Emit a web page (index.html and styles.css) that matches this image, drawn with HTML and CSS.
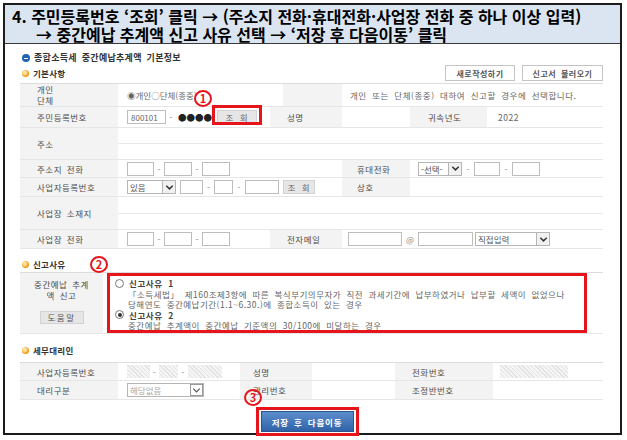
FILE: index.html
```html
<!DOCTYPE html>
<html lang="ko">
<head>
<meta charset="utf-8">
<title>종합소득세 중간예납추계액 기본정보</title>
<link rel="stylesheet" href="styles.css">
</head>
<body>
<div class="frame">
  <div class="title">
    <p>4. 주민등록번호 ‘조회’ 클릭 → (주소지 전화·휴대전화·사업장 전화 중 하나 이상 입력)<br><span class="indent">→ 중간예납 추계액 신고 사유 선택 → ‘저장 후 다음이동’ 클릭</span></p>
  </div>

  <div class="content">
    <h2 class="sec-main"><span class="ico-blue"></span>종합소득세 중간예납추계액 기본정보</h2>

    <div class="sec-head">
      <h3 class="sec"><span class="ico-orange"></span>기본사항</h3>
      <div class="tools">
        <button class="btn-w b1">새로작성하기</button>
        <button class="btn-w b2">신고서 불러오기</button>
      </div>
    </div>

    <div class="tbl">
      <div class="row h23">
        <div class="lb c98 two">개인<br>단체</div>
        <div class="vl c165"><span class="rtxt">◉개인○단체(종중)</span></div>
        <div class="lb c59"></div>
        <div class="vl c261 desc">개인 또는 단체(종중) 대하여 신고할 경우에 선택합니다.</div>
      </div>
      <div class="row h21">
        <div class="lb c98">주민등록번호</div>
        <div class="vl c152">
          <span class="in w39">800101</span><span class="dash w10">-</span><span class="in w38 pw">●●●●</span><span class="btn-g w40 ml3">조 회</span>
        </div>
        <div class="lb c72">성명</div>
        <div class="vl c68"></div>
        <div class="lb c77">귀속년도</div>
        <div class="vl c116 txt">2022</div>
      </div>
      <div class="row h32">
        <div class="lb c98">주소</div>
        <div class="vl c485 split"><div class="sub"></div><div class="sub"></div></div>
      </div>
      <div class="row h18">
        <div class="lb c98">주소지 전화</div>
        <div class="vl c224">
          <span class="in w27"></span><span class="dash w10">-</span><span class="in w28"></span><span class="dash w10">-</span><span class="in w28"></span>
        </div>
        <div class="lb c68">휴대전화</div>
        <div class="vl c193 pl8">
          <span class="sel w44"><span class="st">-선택-</span><span class="arr"><svg viewBox="0 0 12 12" width="11" height="11"><polyline points="2.5,4 6,7.5 9.5,4" fill="none" stroke="#333" stroke-width="1.6"/></svg></span></span><span class="dash w12">-</span><span class="in w26"></span><span class="dash w12">-</span><span class="in w28"></span>
        </div>
      </div>
      <div class="row h19">
        <div class="lb c98">사업자등록번호</div>
        <div class="vl c224">
          <span class="sel w49"><span class="st">있음</span><span class="arr"><svg viewBox="0 0 12 12" width="11" height="11"><polyline points="2.5,4 6,7.5 9.5,4" fill="none" stroke="#333" stroke-width="1.6"/></svg></span></span><span class="in w23 ml4"></span><span class="dash w11">-</span><span class="in w19"></span><span class="dash w12">-</span><span class="in w34"></span><span class="btn-g w32 ml4">조 회</span>
        </div>
        <div class="lb c68">상호</div>
        <div class="vl c193"></div>
      </div>
      <div class="row h33">
        <div class="lb c98">사업장 소재지</div>
        <div class="vl c485 split"><div class="sub"></div><div class="sub"></div></div>
      </div>
      <div class="row h19">
        <div class="lb c98">사업장 전화</div>
        <div class="vl c152">
          <span class="in w27"></span><span class="dash w10">-</span><span class="in w28"></span><span class="dash w10">-</span><span class="in w28"></span>
        </div>
        <div class="lb c72">전자메일</div>
        <div class="vl c261 pl6">
          <span class="in w54"></span><span class="dash w16">@</span><span class="in w55"></span><span class="sel w75 ml2"><span class="st">직접입력</span><span class="arr"><svg viewBox="0 0 12 12" width="11" height="11"><polyline points="2.5,4 6,7.5 9.5,4" fill="none" stroke="#333" stroke-width="1.6"/></svg></span></span>
        </div>
      </div>
    </div>

    <h3 class="sec sec2"><span class="ico-orange"></span>신고사유</h3>
    <div class="tbl">
      <div class="row h61">
        <div class="lb c83 center-lb">
          <span class="lb-lines">중간예납 추계<br>액 신고</span>
          <span class="btn-g help">도움말</span>
        </div>
        <div class="vl c500 reason-cell">
          <div class="red-area">
            <p class="opt"><span class="radio"></span><b>신고사유 1</b></p>
            <p class="ex">「소득세법」 제160조제3항에 따른 복식부기의무자가 직전 과세기간에 납부하였거나 납부할 세액이 없었으나</p>
            <p class="ex">당해연도 중간예납기간(1.1~6.30.)에 종합소득이 있는 경우</p>
            <p class="opt"><span class="radio on"></span><b>신고사유 2</b></p>
            <p class="ex">중간예납 추계액이 중간예납 기준액의 30/100에 미달하는 경우</p>
          </div>
        </div>
      </div>
    </div>

    <h3 class="sec sec3"><span class="ico-orange"></span>세무대리인</h3>
    <div class="tbl">
      <div class="row h18">
        <div class="lb c98">사업자등록번호</div>
        <div class="vl c122">
          <span class="hatch w23"></span><span class="dash w9">-</span><span class="hatch w19"></span><span class="dash w10">-</span><span class="hatch w34"></span>
        </div>
        <div class="lb c72 pl13">성명</div>
        <div class="vl c83"></div>
        <div class="lb c98">전화번호</div>
        <div class="vl c110 pl7"><span class="hatch w68"></span></div>
      </div>
      <div class="row h19">
        <div class="lb c98">대리구분</div>
        <div class="vl c122">
          <span class="sel w77 dim"><span class="st">해당없음</span><span class="arr"><svg viewBox="0 0 12 12" width="11" height="11"><polyline points="2.5,4 6,7.5 9.5,4" fill="none" stroke="#555" stroke-width="1.3"/></svg></span></span>
        </div>
        <div class="lb c72 pl13">관리번호</div>
        <div class="vl c83"></div>
        <div class="lb c98">조정반번호</div>
        <div class="vl c110"></div>
      </div>
    </div>

    <div class="save-row">
      <div class="red-wrap"><button class="btn-save">저장 후 다음이동</button></div>
    </div>
  </div>

  <span class="mark-box"></span>
  <span class="num n1">1</span>
  <span class="num n2">2</span>
  <span class="num n3">3</span>
</div>
</body>
</html>
```

FILE: styles.css
```css
* { box-sizing: border-box; margin: 0; padding: 0; }

body {
  width: 627px;
  height: 440px;
  overflow: hidden;
  background: #fff;
  font-family: "Noto Sans CJK KR", "Noto Sans", sans-serif;
  color: #555;
}

.frame {
  position: relative;
  margin: 3px 0 0 3px;
  width: 619px;
  height: 432px;
  border: 2px solid #1c1c1c;
}

/* ---------- title ---------- */
.title {
  height: 39px;
  background: #dbe5f1;
  border-bottom: 1px solid #3a3a3a;
  padding: 2px 0 0 7px;
  color: #000;
  font-size: 16px;
  line-height: 18px;
  font-weight: 700;
  white-space: nowrap;
}
.title .indent { padding-left: 24px; }

/* ---------- content ---------- */
.content { padding-left: 15px; }

.sec-main {
  display: flex;
  align-items: center;
  gap: 4px;
  margin-top: 8px;
  height: 12px;
  font-size: 9px;
  line-height: 12px;
  font-weight: 700;
  color: #333;
  letter-spacing: 0.3px;
  word-spacing: 2px;
}
.ico-blue {
  position: relative;
  width: 8px;
  height: 8px;
  margin-left: 2px;
  border-radius: 50%;
  background: #1f63b5;
}
.ico-blue::after {
  content: "";
  position: absolute;
  left: 2px;
  top: 3.5px;
  width: 4px;
  height: 1px;
  background: #fff;
}
.ico-orange {
  width: 7px;
  height: 7px;
  margin-left: 2px;
  border-radius: 50%;
  background: radial-gradient(circle at 40% 40%, #ffe2a0 0 25%, #f29a12 60%);
}

.sec-head {
  display: flex;
  justify-content: space-between;
  align-items: center;
  width: 583px;
  height: 16px;
  margin-top: 1px;
}
.sec {
  display: flex;
  align-items: center;
  gap: 4px;
  height: 12px;
  font-size: 8.5px;
  line-height: 12px;
  font-weight: 700;
  color: #333;
  letter-spacing: 0.3px;
}
.tools { display: flex; gap: 7px; }
.btn-w {
  height: 16px;
  border: 1px solid #c4c4c4;
  background: #fff;
  font-family: inherit;
  font-size: 8px;
  font-weight: 700;
  color: #555;
  letter-spacing: 0.5px;
  word-spacing: 2px;
}
.b1 { width: 70px; }
.b2 { width: 81px; }

/* ---------- tables ---------- */
.tbl {
  width: 583px;
  margin-top: 2px;
  border-top: 1px solid #dcdcdc;
  font-size: 8.5px;
  letter-spacing: 0.5px;
  word-spacing: 2px;
}
.row {
  display: flex;
  border-bottom: 1px solid #e6e6e6;
}
.h18 { height: 18px; }
.h19 { height: 19px; }
.h21 { height: 21px; }
.h23 { height: 23px; }
.h32 { height: 32px; }
.h33 { height: 33px; }
.h61 { height: 61px; }

.lb {
  display: flex;
  align-items: center;
  padding-left: 17px;
  background: #f3f3f3;
  color: #4d4d4d;
  white-space: nowrap;
}
.lb.two { line-height: 11px; }
.vl {
  display: flex;
  align-items: center;
  padding-left: 9px;
  background: #fff;
  color: #777;
  white-space: nowrap;
}
.c59 { width: 59px; }
.c68 { width: 68px; padding-left: 15px; }
.c72 { width: 72px; }
.c72.lb { padding-left: 17px; }
.c77 { width: 77px; padding-left: 18px; }
.c83 { width: 83px; }
.c98 { width: 98px; }
.c110 { width: 110px; }
.c116 { width: 116px; padding-left: 11px; }
.c122 { width: 122px; }
.c152 { width: 152px; }
.c165 { width: 165px; }
.c193 { width: 193px; }
.c224 { width: 224px; }
.c261 { width: 261px; }
.c485 { width: 485px; }
.c500 { width: 500px; }
.pl6 { padding-left: 6px; }
.pl7 { padding-left: 7px; }
.pl8 { padding-left: 8px; }
.lb.pl13 { padding-left: 13px; }
.ml2 { margin-left: 2px; }
.ml3 { margin-left: 3px; }
.ml4 { margin-left: 4px; }

.desc { padding-left: 8px; color: #666; letter-spacing: 0.55px; word-spacing: 2.5px; }
.rtxt { color: #666; letter-spacing: 0; }
.txt { color: #666; }

.split {
  flex-direction: column;
  align-items: stretch;
  padding: 0;
}
.split .sub { flex: 1; }
.split .sub + .sub { border-top: 1px solid #eaeaea; }

.in, .sel, .hatch {
  display: inline-flex;
  align-items: center;
  height: 14px;
  flex: none;
}
.in {
  border: 1px solid #bdbdbd;
  background: #fff;
  padding-left: 3px;
  color: #666;
  letter-spacing: 0;
  font-size: 8px;
}
.in.pw {
  color: #222;
  font-size: 8.5px;
  padding-left: 1px;
  border-color: #fff;
}
.hatch {
  height: 13px;
  background: repeating-linear-gradient(45deg, #e2e2e2 0 1px, #f5f5f5 1px 3px);
}
.dash {
  display: inline-flex;
  justify-content: center;
  flex: none;
  color: #888;
  letter-spacing: 0;
}
.sel {
  justify-content: space-between;
  border: 1px solid #b5b5b5;
  background: #fff;
  color: #555;
  letter-spacing: 0;
}
.sel .st { padding-left: 2px; }
.sel .arr {
  display: flex;
  align-items: center;
  justify-content: center;
  width: 13px;
  height: 12px;
  border-left: 1px solid #b5b5b5;
  background: #f1f1f1;
}
.sel.dim { color: #aaa; }
.sel.dim .arr { border: 1px solid #999; background: #fff; }

.btn-g {
  display: inline-flex;
  align-items: center;
  justify-content: center;
  flex: none;
  height: 14px;
  background: #e6e6e6;
  border: 1px solid #d2d2d2;
  color: #666;
  letter-spacing: 1px;
}

.w9 { width: 9px; } .w10 { width: 10px; } .w11 { width: 11px; } .w12 { width: 12px; }
.w16 { width: 16px; } .w19 { width: 19px; } .w23 { width: 23px; } .w26 { width: 26px; }
.w27 { width: 27px; } .w28 { width: 28px; } .w32 { width: 32px; } .w34 { width: 34px; }
.w38 { width: 38px; } .w39 { width: 39px; } .w40 { width: 40px; } .w44 { width: 44px; }
.w49 { width: 49px; } .w54 { width: 54px; } .w55 { width: 55px; } .w68 { width: 68px; }
.w75 { width: 75px; } .w77 { width: 77px; }

/* ---------- 신고사유 ---------- */
.sec2 { margin-top: 9px; }
.sec3 { margin-top: 10px; }
.sec3 + .tbl { margin-top: 6px; }
.sec2 + .tbl { margin-top: 2px; }

.center-lb {
  flex-direction: column;
  align-items: center;
  justify-content: flex-start;
  padding: 6px 0 0 0;
  line-height: 11px;
  text-align: center;
}
.lb-lines { display: block; }
.help {
  width: 44px;
  height: 13px;
  margin-top: 10px;
  letter-spacing: 1.5px;
  color: #555;
}

.reason-cell {
  align-items: stretch;
  padding: 0 0 0 4px;
}
.red-area {
  width: 480px;
  border: 3px solid #e8141b;
  padding: 2px 0 0 5px;
  line-height: 10.5px;
  color: #666;
  font-size: 8.5px;
  letter-spacing: 0.5px;
  word-spacing: 2.5px;
}
.opt {
  display: flex;
  align-items: center;
  gap: 5px;
  color: #444;
}
.opt b { font-weight: 700; letter-spacing: 0.6px; }
.ex { padding-left: 13px; }
.radio {
  position: relative;
  width: 9px;
  height: 9px;
  border: 1px solid #7a7a7a;
  border-radius: 50%;
  background: #fff;
}
.radio.on::after {
  content: "";
  position: absolute;
  left: 1.5px;
  top: 1.5px;
  width: 4px;
  height: 4px;
  border-radius: 50%;
  background: #333;
}

/* ---------- save ---------- */
.save-row {
  display: flex;
  justify-content: center;
  width: 604px;
  margin-left: -15px;
  margin-top: 7px;
}
.red-wrap {
  border: 3px solid #e8141b;
  padding: 1px 2px;
}
.btn-save {
  display: block;
  width: 93px;
  height: 21px;
  border: 1px solid #2b548c;
  background: linear-gradient(#5d8dcb, #2f63a8);
  color: #fff;
  font-family: inherit;
  font-size: 8.5px;
  font-weight: 700;
  letter-spacing: 0.8px;
  word-spacing: 2px;
}

/* ---------- annotation overlays ---------- */
.mark-box {
  position: absolute;
  left: 207px;
  top: 100px;
  width: 50px;
  height: 20px;
  border: 3px solid #e8141b;
}
.num {
  position: absolute;
  display: flex;
  align-items: center;
  justify-content: center;
  width: 18px;
  height: 17px;
  border: 2px solid #e8141b;
  border-radius: 50%;
  color: #e8141b;
  font-size: 11px;
  font-weight: 700;
  line-height: 1;
}
.n1 { left: 189px; top: 85px; }
.n2 { left: 85px; top: 251px; }
.n3 { left: 239px; top: 384px; }
```
